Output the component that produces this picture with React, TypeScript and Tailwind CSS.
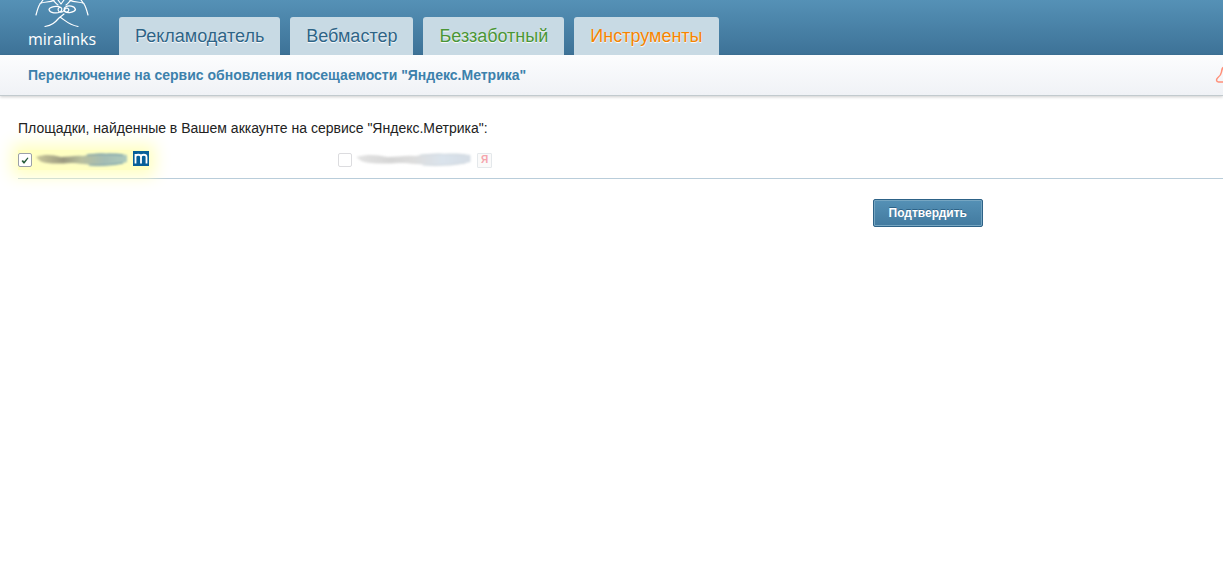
const tabs = [
  { label: 'Рекламодатель', color: 'text-[#2e6486]' },
  { label: 'Вебмастер', color: 'text-[#2e6486]' },
  { label: 'Беззаботный', color: 'text-[#4a9636]' },
  { label: 'Инструменты', color: 'text-[#f58400]' },
];

function Logo() {
  return (
    <a href="#" className="ml-[27px] flex w-[70px] flex-col items-center text-white">
      <svg width="70" height="29" viewBox="0 0 70 29" fill="none" stroke="currentColor" strokeWidth="1.2" strokeLinecap="round" strokeLinejoin="round">
        <path d="M9 15c1-4 2-8 4-11l3-4M13 3.500c4-2 9-1 14-3M61 15c-1-4-2-8-4-11l-3-4M57 3.500c-4-2-9-1-14-3" />
        <path d="M25 0c2 0 3 3 6 5M45 0c-2 0-3 3-6 5M31 0l3 4 3-4" />
        <path d="M34 7.500c-4-2-11-1-12 2 1 4 8 4 11 2.500 3-2 2-5-.5-4.500-2 .5-2 4 .5 4.500 4 1.500 4-4 7-4 3 1 2 4-.5 4-3-.5-3-4-1-5 3-2 9-1 10 2.500-1 3-8 4-11 2" />
        <path d="M18 26.500c7-1 10-4 14-8.500l5-4M33 17c6 4 9 8 18 9.500" />
      </svg>
      <span className="font-['Open_Sans',sans-serif] text-base leading-5">miralinks</span>
    </a>
  );
}

function BellIcon() {
  return (
    <svg width="20" height="20" viewBox="0 0 20 20" fill="none" stroke="#ff8f78" strokeWidth="1.500" strokeLinejoin="round">
      <path d="M10 2C7 2 7 4 6.500 7 6 10 5 11 3 12.500 1 14 1 17 3.500 17h13c2.500 0 2.500-3 .5-4.500-2-1.500-3-2.500-3.500-5.500-.5-3-.5-5-3.500-5z" />
    </svg>
  );
}

function HiddenSite({ id, tones, width }: { id: string; tones: string[]; width: number }) {
  return (
    <svg width={width} height="18" viewBox="0 0 94 18" preserveAspectRatio="none" aria-hidden="true">
      <defs>
        <filter id={`${id}-soft`} x="-10%" y="-30%" width="120%" height="160%">
          <feGaussianBlur stdDeviation="1" />
        </filter>
        <linearGradient id={id}>
          <stop offset="0" stopColor={tones[0]} />
          <stop offset=".3" stopColor={tones[1]} />
          <stop offset=".5" stopColor={tones[2]} />
          <stop offset=".75" stopColor={tones[3]} />
          <stop offset="1" stopColor={tones[4]} />
        </linearGradient>
      </defs>
      <g filter={`url(#${id}-soft)`}>
        <path d="M1 6c10-3 16-2 25 0 8 0 14-2 22-1 9-2 14-3 23-2 9-1 15 0 21 1v7c-10 3-18 3-30 3-10 0-17-2-27-2-12 1-24 1-30-2z" fill={`url(#${id})`} />
        <path d="M52 4c10-1 22-1 36 0M54 14c10 1 24 0 34-2" fill="none" stroke={tones[5]} strokeWidth="1" />
      </g>
    </svg>
  );
}

function App() {
  return (
    <div className="overflow-hidden bg-white font-['Liberation_Sans',Arial,sans-serif] text-[#222]">
      <header className="flex h-[55px] bg-linear-to-b from-[#5591b6] to-[#3d7297]">
        <Logo />
        <nav className="ml-[22px] flex gap-2.5 self-end">
          {tabs.map((tab) => (
            <a
              key={tab.label}
              href="#"
              className={`flex h-[38px] items-center whitespace-nowrap rounded-t-[3px] bg-[#c8dae4] px-4 text-lg text-shadow-[0_1px_1px_#fff] ${tab.color}`}
            >
              {tab.label}
            </a>
          ))}
        </nav>
      </header>

      <div className="flex h-[41px] items-center justify-between border-b border-[#c2cace] bg-linear-to-b from-[#fcfdfe] to-[#f0f2f6] pl-7 shadow-[0_1px_3px_rgba(0,0,0,0.2)]">
        <h1 className="whitespace-nowrap text-sm font-bold text-[#3c81ac]">
          Переключение на сервис обновления посещаемости "Яндекс.Метрика"
        </h1>
        <button type="button" aria-label="Уведомления" className="-mr-3 shrink-0">
          <BellIcon />
        </button>
      </div>

      <main className="pl-[18px] pt-[22px]">
        <p className="relative z-10 text-sm">Площадки, найденные в Вашем аккаунте на сервисе "Яндекс.Метрика":</p>
        <form>
          <div className="flex h-[41px] items-center border-b border-[#b9cdda] pt-1">
            <div className="flex w-80">
              <label className="inline-flex h-5 items-center bg-[#ffffc2] shadow-[0_0_16px_6px_#ffffc2]">
                <span className="relative flex">
                  <input type="checkbox" defaultChecked aria-label="Площадка 1" className="peer size-3.5 appearance-none rounded-[2px] border border-[#9ba0a8] bg-white" />
                  <svg viewBox="0 0 14 14" className="pointer-events-none absolute inset-0 hidden size-3.5 peer-checked:block">
                    <path d="M3.500 8l1.500-1 1 1.500L9.500 4.500l1 .5L6.500 10.500H5.500z" fill="#245b38" />
                  </svg>
                </span>
                <span className="ml-[3px] mr-1">
                  <HiddenSite id="site-1" width={94} tones={['#cac89c', '#9b9a80', '#b9bf9e', '#a4bdb4', '#adcabc', '#5f90a6']} />
                </span>
                <svg width="16" height="18" viewBox="0 0 16 18" role="img" aria-label="Miralinks">
                  <path d="M0 0h16v15H0z" fill="#075f99" />
                  <path d="M2.500 12.500V3M2.500 6c0-3 5.500-3 5.500 0v6.500M8 6c0-3 5.500-3 5.500 0v6.500" fill="none" stroke="#fff" strokeWidth="1.800" />
                </svg>
              </label>
            </div>
            <label className="inline-flex h-5 items-center">
              <input type="checkbox" aria-label="Площадка 2" className="size-3.5 appearance-none rounded-[2px] border border-[#dcdcdf] bg-white checked:bg-[#5591b6]" />
              <span className="ml-[3px] mr-1">
                <HiddenSite id="site-2" width={118} tones={['#e4e4e4', '#d6d6d6', '#dddddd', '#dae3ec', '#d5dde5', '#d0d8df']} />
              </span>
              <span className="flex size-[15px] items-center justify-center rounded-[1px] border border-[#e4e8eb] bg-[#fafafa] text-[10px] font-bold leading-none text-[#f5a5ad]">
                Я
              </span>
            </label>
          </div>
          <div className="flex justify-end pr-60 pt-5">
            <button
              type="submit"
              className="h-7 rounded-[2px] border border-[#2d6287] bg-linear-to-b from-[#5591b6] to-[#427a9f] px-[15px] text-xs font-bold text-white inset-shadow-[0_0_0_1px_#76a6c2] text-shadow-[0_-1px_0_#2d6287]"
            >
              Подтвердить
            </button>
          </div>
        </form>
      </main>
    </div>
  );
}

export default App;
